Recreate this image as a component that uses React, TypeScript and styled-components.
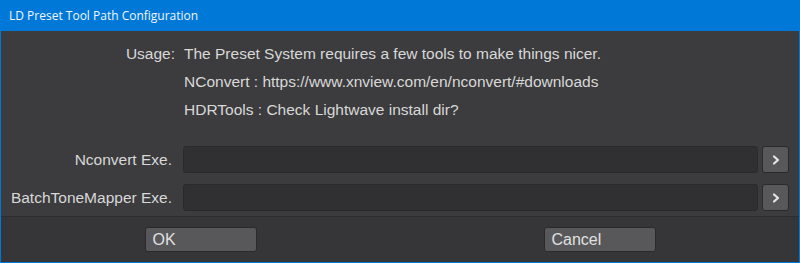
import React, { FC } from 'react';
import styled, { createGlobalStyle } from 'styled-components';

const usage: string[] = [
  'The Preset System requires a few tools to make things nicer.',
  'NConvert : https://www.xnview.com/en/nconvert/#downloads',
  'HDRTools : Check Lightwave install dir?',
];

const fields: string[] = ['Nconvert Exe.', 'BatchToneMapper Exe.'];

const GlobalStyle = createGlobalStyle`
  html, body {
    margin: 0;
    padding: 0;
    background: #3c3c3e;
  }
`;

const Chevron: FC = () => (
  <svg width="10" height="12" viewBox="0 0 10 12">
    <path d="M3 2.5 L7 6 L3 9.5" fill="none" stroke="#e6e6e6" strokeWidth="2.2" strokeLinecap="round" strokeLinejoin="round" />
  </svg>
);

const App: FC = () => {
  return (
    <>
      <GlobalStyle />
      <Window>
        <TitleBar>LD Preset Tool Path Configuration</TitleBar>
        <Body>
          <Usage>
            <UsageLabel>Usage:</UsageLabel>
            <UsageLines>
              {usage.map((line, index) => (
                <Line key={index}>{line}</Line>
              ))}
            </UsageLines>
          </Usage>
          <Fields>
            {fields.map((label, index) => (
              <Field key={index}>
                <FieldLabel>{label}</FieldLabel>
                <Input />
                <BrowseButton>
                  <Chevron />
                </BrowseButton>
              </Field>
            ))}
          </Fields>
        </Body>
        <Footer>
          <FooterCell>
            <Button>OK</Button>
          </FooterCell>
          <FooterCell>
            <Button>Cancel</Button>
          </FooterCell>
        </Footer>
      </Window>
    </>
  );
};

export default App;

const Window = styled.div`
  width: 800px;
  height: 263px;
  box-sizing: border-box;
  display: flex;
  flex-direction: column;
  border: 1px solid #0078d7;
  border-top: none;
  background: #3c3c3e;
  font-family: 'Liberation Sans', Arial, sans-serif;
  color: #d8d8d8;
`;

const TitleBar = styled.div`
  height: 31px;
  margin: 0 -1px;
  padding-left: 9px;
  display: flex;
  align-items: center;
  background: #0078d7;
  color: #f2f6fb;
  font-family: 'Open Sans', 'Noto Sans', sans-serif;
  font-size: 12px;
`;

const Body = styled.div`
  flex: 1;
  padding: 9px 0 5px 0;
  display: flex;
  flex-direction: column;
  gap: 22px;
  border-bottom: 1px solid #2c2c2e;
`;

const Usage = styled.div`
  display: grid;
  grid-template-columns: 174px 1fr;
  column-gap: 9px;
  font-size: 15.5px;
  line-height: 28px;
`;

const UsageLabel = styled.div`
  text-align: right;
`;

const UsageLines = styled.div`
  display: flex;
  flex-direction: column;
`;

const Line = styled.div`
  white-space: nowrap;
`;

const Fields = styled.div`
  display: flex;
  flex-direction: column;
  gap: 11px;
`;

const Field = styled.div`
  display: grid;
  grid-template-columns: 171px 1fr 27px;
  column-gap: 4px;
  align-items: center;
  padding-right: 10px;
  height: 27px;
  font-size: 15.5px;
`;

const FieldLabel = styled.div`
  text-align: right;
  white-space: nowrap;
`;

const Input = styled.div`
  margin-left: 7px;
  height: 27px;
  box-sizing: border-box;
  background: #303032;
  border: 1px solid #2a2a2c;
  border-radius: 3px;
`;

const BrowseButton = styled.div`
  height: 27px;
  box-sizing: border-box;
  display: flex;
  align-items: center;
  justify-content: center;
  background: #58585b;
  border: 1px solid #2a2a2c;
  border-radius: 3px;
`;

const Footer = styled.div`
  height: 45px;
  display: grid;
  grid-template-columns: 1fr 1fr;
  background: #363638;
`;

const FooterCell = styled.div`
  display: flex;
  align-items: center;
  justify-content: center;
`;

const Button = styled.div`
  width: 112px;
  height: 25px;
  box-sizing: border-box;
  padding-left: 7px;
  display: flex;
  align-items: center;
  background: #58585b;
  border: 1px solid #2a2a2c;
  border-radius: 3px;
  color: #e0e0e0;
  font-size: 16px;
`;
